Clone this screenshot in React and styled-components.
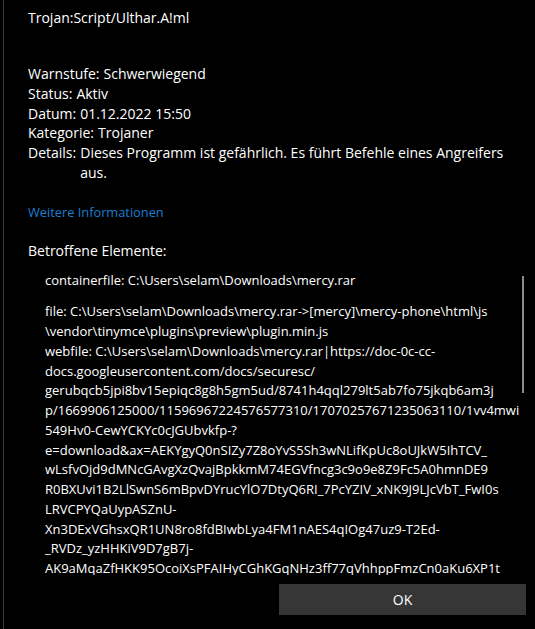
import styled, { createGlobalStyle } from 'styled-components';

const GlobalStyle = createGlobalStyle`
  html, body {
    margin: 0;
    padding: 0;
    background: #000;
  }
  body {
    font-family: "Segoe UI", "Open Sans", "Noto Sans", sans-serif;
    color: #fff;
  }
`;

const Window = styled.div`
  position: relative;
  height: 629px;
  margin-left: 3px;
  border-left: 1px solid #3c3c3c;
  background: #000;
  display: flex;
  flex-direction: column;
  overflow: hidden;
`;

const Content = styled.div`
  flex: 1;
  overflow: hidden;
  padding: 8px 24px 0 24px;
  font-size: 14px;
  line-height: 19.75px;
`;

const Title = styled.div`
  line-height: 20px;
  margin-bottom: 36px;
`;

const InfoRow = styled.div`
  display: flex;
  gap: 4px;
`;

const Label = styled.span`
  flex-shrink: 0;
`;

const Value = styled.span`
  flex: 1;
`;

const MoreLink = styled.a`
  display: block;
  margin-top: 19px;
  color: #1a7fd4;
  font-size: 12.8px;
  line-height: 20px;
  text-decoration: none;
`;

const SectionTitle = styled.div`
  margin-top: 19px;
  line-height: 20px;
`;

const ItemList = styled.div`
  margin-top: 10px;
  padding-left: 17px;
  font-size: 13px;
`;

const Item = styled.div`
  margin-bottom: ${p => (p.$spaced ? '12px' : '0')};
  white-space: nowrap;
`;

const Thumb = styled.div`
  position: absolute;
  left: 518px;
  top: 276px;
  width: 2px;
  height: 117px;
  background: #8b8b8b;
`;

const Footer = styled.div`
  height: 54px;
  flex-shrink: 0;
  display: flex;
  justify-content: flex-end;
  align-items: flex-start;
  padding: 9px 9px 0 0;
  box-sizing: border-box;
`;

const Button = styled.button`
  width: 247px;
  height: 31px;
  border: none;
  border-radius: 0;
  background: #363636;
  color: #fff;
  font-family: inherit;
  font-size: 14px;
`;

const details = [
  ['Warnstufe:', 'Schwerwiegend'],
  ['Status:', 'Aktiv'],
  ['Datum:', '01.12.2022 15:50'],
  ['Kategorie:', 'Trojaner'],
  ['Details:', 'Dieses Programm ist gefährlich. Es führt Befehle eines Angreifers aus.'],
];

const items = [
  ['containerfile: C:\\Users\\selam\\Downloads\\mercy.rar'],
  [
    'file: C:\\Users\\selam\\Downloads\\mercy.rar->[mercy]\\mercy-phone\\html\\js',
    '\\vendor\\tinymce\\plugins\\preview\\plugin.min.js',
  ],
  [
    'webfile: C:\\Users\\selam\\Downloads\\mercy.rar|https://doc-0c-cc-',
    'docs.googleusercontent.com/docs/securesc/',
    'gerubqcb5jpi8bv15epiqc8g8h5gm5ud/8741h4qql279lt5ab7fo75jkqb6am3j',
    'p/1669906125000/11596967224576577310/17070257671235063110/1vv4mwi',
    '549Hv0-CewYCKYc0cJGUbvkfp-?',
    'e=download&ax=AEKYgyQ0nSIZy7Z8oYvS5Sh3wNLifKpUc8oUJkW5IhTCV_',
    'wLsfvOjd9dMNcGAvgXzQvajBpkkmM74EGVfncg3c9o9e8Z9Fc5A0hmnDE9',
    'R0BXUvi1B2LlSwnS6mBpvDYrucYlO7DtyQ6RI_7PcYZIV_xNK9J9LJcVbT_FwI0s',
    'LRVCPYQaUypASZnU-',
    'Xn3DExVGhsxQR1UN8ro8fdBIwbLya4FM1nAES4qIOg47uz9-T2Ed-',
    '_RVDz_yzHHKiV9D7gB7j-',
    'AK9aMqaZfHKK95OcoiXsPFAIHyCGhKGqNHz3ff77qVhhppFmzCn0aKu6XP1t',
  ],
];

const App = () => {
  return (
    <>
      <GlobalStyle />
      <Window>
        <Content>
          <Title>Trojan:Script/Ulthar.A!ml</Title>
          {details.map(([label, value]) => (
            <InfoRow key={label}>
              <Label>{label}</Label>
              <Value>{value}</Value>
            </InfoRow>
          ))}
          <MoreLink href="#">Weitere Informationen</MoreLink>
          <SectionTitle>Betroffene Elemente:</SectionTitle>
          <ItemList>
            {items.map((lines, i) => (
              <Item key={i} $spaced={i === 0}>
                {lines.map((line, j) => (
                  <div key={j}>{line}</div>
                ))}
              </Item>
            ))}
          </ItemList>
        </Content>
        <Thumb />
        <Footer>
          <Button>OK</Button>
        </Footer>
      </Window>
    </>
  );
};

export default App;
